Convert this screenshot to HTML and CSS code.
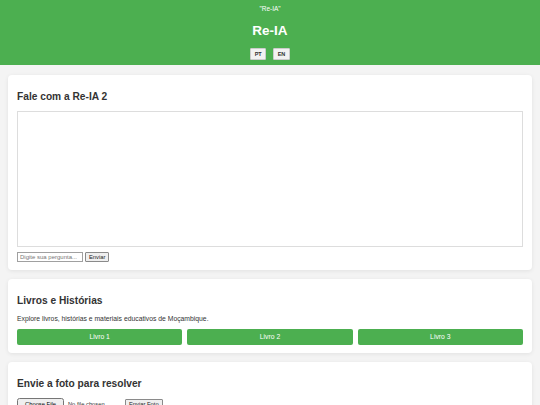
FILE: index.html
```html
<!DOCTYPE html>
<html lang="pt">
<head>
    <meta charset="UTF-8">
    <meta name="viewport" content="width=device-width, initial-scale=1.0">
    <title>Re-IA</title>
    <link rel="stylesheet" href="styles.css">
</head>
<body>
    <div class="header">
        <p class="tag">"Re-IA"</p>
        <h1>Re-IA</h1>
        <div class="lang">
            <button class="lang-btn">PT</button>
            <button class="lang-btn">EN</button>
        </div>
    </div>

    <div class="main">
        <!-- chat -->
        <div class="card">
            <h2>Fale com a Re-IA 2</h2>
            <div class="chat-box" id="chatBox"></div>
            <div class="chat-row">
                <input type="text" class="chat-input" placeholder="Digite sua pergunta...">
                <button class="small-btn">Enviar</button>
            </div>
        </div>

        <!-- livros -->
        <div class="card">
            <h2>Livros e Histórias</h2>
            <p class="text">Explore livros, histórias e materiais educativos de Moçambique.</p>
            <div class="books">
                <button class="book-btn">Livro 1</button>
                <button class="book-btn">Livro 2</button>
                <button class="book-btn">Livro 3</button>
            </div>
        </div>

        <!-- foto -->
        <div class="card">
            <h2>Envie a foto para resolver</h2>
            <div class="photo-row">
                <input type="file" class="file-input">
                <button class="small-btn">Enviar Foto</button>
            </div>
        </div>
    </div>
</body>
</html>
```

FILE: styles.css
```css
:root {
    --green: #4caf50;
    --text: #333;
    --page-bg: #f4f4f4;
}

body {
    font-family: 'Liberation Sans', Arial, sans-serif;
    background: var(--page-bg);
    margin: 0;
    color: var(--text);
    font-size: 6.8px;
}

.header {
    background: var(--green);
    color: white;
    text-align: center;
    padding: 5px 0;
}

.tag {
    margin: 0;
    font-size: 6.5px;
    line-height: 8px;
}

.header h1 {
    font-size: 13.5px;
    line-height: 15px;
    margin: 9.5px 0 10.5px;
}

.lang {
    display: flex;
    justify-content: center;
    gap: 7px;
}

.lang-btn {
    font-family: inherit;
    font-size: 5.5px;
    font-weight: bold;
    line-height: 6px;
    padding: 2px 3.5px;
    background: #f2f2f2;
    color: #333;
    border: 1px solid #ccc;
    border-radius: 1px;
}

.main {
    padding: 10px 8px;
    display: flex;
    flex-direction: column;
    gap: 9px;
}

.card {
    background: white;
    border-radius: 4px;
    padding: 8px 9px;
    box-shadow: 0 1px 4px rgba(0,0,0,0.08);
}

.card h2 {
    font-size: 10.2px;
    line-height: 11.5px;
    margin: 8.3px 0;
    color: var(--text);
}

.chat-box {
    height: 134px;
    border: 1px solid #ddd;
    background: white;
}

.chat-row {
    display: flex;
    gap: 2px;
    margin-top: 5px;
}

.chat-input {
    width: 66px;
    box-sizing: border-box;
    height: 10px;
    padding: 0 2px;
    font-family: inherit;
    font-size: 6px;
    border: 1px solid #a0a0a0;
}

.chat-input::placeholder {
    color: #777;
}

.small-btn {
    font-family: inherit;
    font-size: 5.8px;
    height: 10px;
    padding: 0 3px;
    line-height: 8px;
    background: #efefef;
    color: #222;
    border: 1px solid #8a8a8a;
    border-radius: 1px;
}

.text {
    margin: 6.4px 0;
    line-height: 7.4px;
}

.books {
    display: grid;
    grid-template-columns: repeat(3, 1fr);
    gap: 5px;
}

.book-btn {
    background: var(--green);
    color: white;
    border: none;
    border-radius: 2px;
    height: 16px;
    font-family: inherit;
    font-size: 6.8px;
}

.photo-row {
    display: flex;
    gap: 2px;
    align-items: center;
}

.file-input {
    width: 106px;
    font-family: inherit;
    font-size: 5.8px;
}
```
